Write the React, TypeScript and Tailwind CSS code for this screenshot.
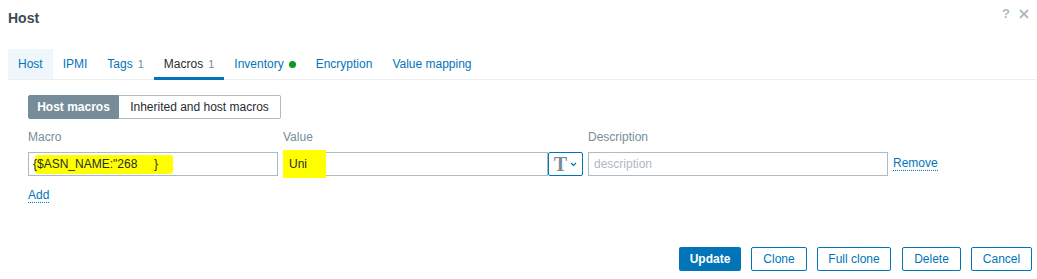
import React from "react";

const tabs = [
  { label: "Host", count: null as string | null, active: false, first: true },
  { label: "IPMI", count: null, active: false },
  { label: "Tags", count: "1", active: false },
  { label: "Macros", count: "1", active: true },
  { label: "Inventory", count: "dot", active: false },
  { label: "Encryption", count: null, active: false },
  { label: "Value mapping", count: null, active: false },
];

export default function App() {
  return (
    <div
      className="relative w-[1037px] h-[279px] bg-white text-[12px] text-[#1f2c33] overflow-hidden"
      style={{ fontFamily: '"Liberation Sans", Arial, sans-serif' }}
    >
      {/* header */}
      <div className="flex items-center justify-between pl-[8px] pr-[8px] h-[36px]">
        <div className="text-[14px] font-bold text-[#3d4a56]">Host</div>
        <div className="flex items-center gap-[9px] text-[#acbbc2] -mt-[9px]">
          <span className="text-[13px] font-bold">?</span>
          <svg width="10" height="10" viewBox="0 0 10 10">
            <path d="M1 1 L9 9 M9 1 L1 9" stroke="#acbbc2" strokeWidth="1.8" />
          </svg>
        </div>
      </div>

      {/* tabs */}
      <div className="mt-[13px] ml-[8px] flex h-[31px] border-b border-[#ebeef0]">
        {tabs.map((t) => (
          <div
            key={t.label}
            className={
              "relative flex items-center px-[10px] h-[30px] " +
              (t.first ? "bg-[#f0f7fc] " : "") +
              (t.active ? "text-[#1f2c33]" : "text-[#0275b8]")
            }
          >
            <span>{t.label}</span>
            {t.count === "dot" ? (
              <span className="ml-[5px] inline-block w-[7px] h-[7px] rounded-full bg-[#0e9a1e]" />
            ) : t.count ? (
              <span className="ml-[5px] text-[11px] text-[#768d99]">{t.count}</span>
            ) : null}
            {t.active && (
              <div className="absolute left-0 right-0 bottom-[-1px] h-[3px] bg-[#0275b8]" />
            )}
          </div>
        ))}
      </div>

      {/* content */}
      <div className="pl-[28px]">
        {/* subtabs */}
        <div className="mt-[15px] flex h-[24px]">
          <div className="flex items-center justify-center w-[91px] bg-[#768d99] text-white font-bold rounded-l-[2px] border border-[#768d99]">
            Host macros
          </div>
          <div className="flex items-center justify-center w-[162px] bg-white border border-[#acbbc2] border-l-0 rounded-r-[2px]">
            Inherited and host macros
          </div>
        </div>

        {/* labels */}
        <div className="mt-[10px] flex text-[#768d99] h-[15px] items-center">
          <div className="w-[255px]">Macro</div>
          <div className="w-[305px]">Value</div>
          <div>Description</div>
        </div>

        {/* row */}
        <div className="mt-[8px] flex items-center h-[24px]">
          <div className="relative w-[250px] h-[24px] border border-[#acbbc2] flex items-center pl-[4px]">
            <div className="absolute left-[6px] top-[2px] w-[138px] h-[19px] bg-[#ffff00] rounded-[3px]" />
            <span className="relative">{'{$ASN_NAME:"268'}<span className="text-[#ffff00]">.....</span>{"}"}</span>
          </div>
          <div className="ml-[5px] relative flex w-[300px] h-[24px]">
            <div className="flex-1 h-[24px] border border-[#acbbc2] flex items-center pl-[5px]">
              <span className="relative">Uni</span>
            </div>
            <div className="absolute left-[0px] top-[-2px] w-[43px] h-[28px] bg-[#ffff00]" />
            <div className="absolute left-[6px] top-[0px] h-[24px] flex items-center">Uni</div>
            <div className="w-[35px] h-[24px] border border-[#0275b8] rounded-[2px] flex items-center justify-center gap-[3px]">
              <span
                className="text-[20px] leading-none text-[#768d99] font-bold"
                style={{ fontFamily: '"Liberation Serif", "Times New Roman", serif' }}
              >
                T
              </span>
              <svg width="7" height="5" viewBox="0 0 7 5">
                <path d="M1 1 L3.5 3.5 L6 1" stroke="#0275b8" strokeWidth="1.2" fill="none" />
              </svg>
            </div>
          </div>
          <div className="ml-[5px] w-[300px] h-[24px] border border-[#acbbc2] flex items-center pl-[5px] text-[#acbbc2]">
            description
          </div>
          <div className="ml-[5px] text-[#0275b8] border-b border-dotted border-[#0275b8] leading-[13px]">
            Remove
          </div>
        </div>

        {/* add */}
        <div className="mt-[10px]">
          <span className="text-[#0275b8] border-b border-dotted border-[#0275b8] leading-[13px] inline-block">Add</span>
        </div>
      </div>

      {/* footer buttons */}
      <div className="absolute right-[5px] bottom-[8px] flex h-[24px]">
        <div className="flex items-center justify-center bg-[#0275b8] text-white font-bold rounded-[2px] w-[62px]">Update</div>
        <div className="ml-[10px] flex items-center justify-center border border-[#0275b8] text-[#0275b8] rounded-[2px] w-[56px]">Clone</div>
        <div className="ml-[10px] flex items-center justify-center border border-[#0275b8] text-[#0275b8] rounded-[2px] w-[74px]">Full clone</div>
        <div className="ml-[11px] flex items-center justify-center border border-[#0275b8] text-[#0275b8] rounded-[2px] w-[59px]">Delete</div>
        <div className="ml-[10px] flex items-center justify-center border border-[#0275b8] text-[#0275b8] rounded-[2px] w-[61px]">Cancel</div>
      </div>
    </div>
  );
}
